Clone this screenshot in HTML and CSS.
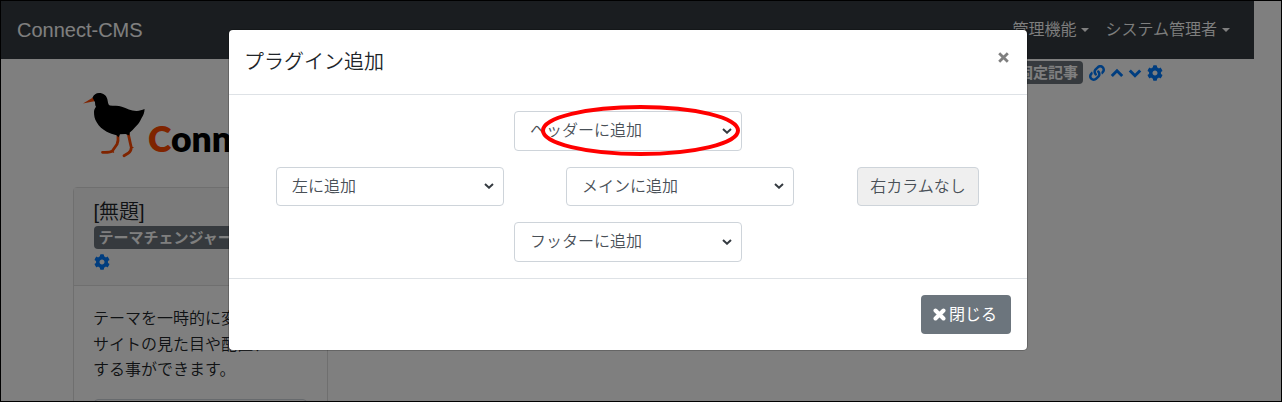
FILE: index.html
```
<!DOCTYPE html>
<html lang="ja">
<head>
<meta charset="utf-8">
<title>Connect-CMS</title>
<link rel="stylesheet" href="styles.css">
</head>
<body>
<svg class="defs" width="0" height="0" aria-hidden="true">
  <symbol id="gear" viewBox="0 0 512 512"><path d="M487.4 315.7l-42.600-24.600c4.300-23.200 4.300-47 0-70.200l42.600-24.600c4.900-2.800 7.100-8.600 5.500-14-11.100-35.600-30-67.800-54.700-94.600-3.800-4.100-10-5.100-14.800-2.300L380.800 110c-17.900-15.400-38.500-27.300-60.800-35.100V25.800c0-5.600-3.900-10.500-9.400-11.700-36.700-8.200-74.300-7.800-109.200 0-5.500 1.200-9.400 6.100-9.400 11.700V75c-22.200 7.900-42.800 19.800-60.800 35.100L88.700 85.500c-4.900-2.800-11-1.900-14.800 2.300-24.700 26.700-43.600 58.900-54.700 94.600-1.700 5.400.6 11.200 5.500 14L67.300 221c-4.300 23.200-4.300 47 0 70.200l-42.600 24.600c-4.900 2.800-7.100 8.600-5.500 14 11.100 35.600 30 67.800 54.700 94.600 3.800 4.100 10 5.100 14.800 2.300l42.600-24.600c17.900 15.400 38.500 27.300 60.800 35.100v49.200c0 5.600 3.900 10.500 9.400 11.700 36.700 8.200 74.300 7.800 109.200 0 5.500-1.200 9.400-6.100 9.400-11.700v-49.200c22.200-7.900 42.800-19.800 60.800-35.100l42.600 24.600c4.900 2.800 11 1.900 14.800-2.300 24.700-26.700 43.600-58.900 54.700-94.600 1.500-5.500-.7-11.300-5.600-14.100zM256 336c-44.100 0-80-35.900-80-80s35.900-80 80-80 80 35.900 80 80-35.900 80-80 80z"/></symbol>
</svg>
<div class="screen">
  <nav class="navbar">
    <span class="brand">Connect-CMS</span>
    <span class="menu">管理機能<i class="caret"></i></span>
    <span class="menu">システム管理者<i class="caret"></i></span>
  </nav>
  <div class="content">
    <aside class="side">
      <div class="logo">
        <svg class="bird" width="64" height="66" viewBox="0 0 64 66">
          <g class="legs">
            <path d="M35 42.500Q35.500 48 34 51.300L29.300 58Q28 59.500 19.500 59.300"/>
            <path d="M45.300 41 47.300 50.300 48.300 54.500Q48 58.500 45.500 60L41 62.800"/>
          </g>
          <path class="foot" d="M29 58l2 1.500M48 54.500h2.500"/>
          <path d="M0 10.500 10 4.500 12.500 8z" fill="#ff4800"/>
          <path d="M9.500 4.500C11 1.500 13 0 16 0c4.500 0 7.300 2.500 8.300 6 .6 2.300.5 5.500 2.500 6.500 4 .3 8.500 0 12 1.200 5 1.500 9.500 4.500 15 4.300 3-.1 5-1 7.800-2-.2 4-1.200 6.500-3 9-1.500 3.500-3.500 6.700-6.300 9-1.800 2-3.500 4-5.500 5.500l-.5 3-3.800-1.500-5.500.2-1.500 3-2-2C30 41.500 26.500 40 23.700 38.700 19.500 36.500 16 33.500 13.700 29.300 11.500 26 11 22.500 11 18.700c.2-2 .8-3.500 2-5-1-1.500-.8-3-1-4.500z" fill="#000"/>
        </svg>
        <span class="logo-text"><span class="logo-c">C</span>onnect</span>
      </div>
      <section class="card">
        <header class="card-head">
          <div class="card-title">[無題]</div>
          <div class="badge">テーマチェンジャー</div>
          <svg class="ico card-gear"><use href="#gear"/></svg>
        </header>
        <div class="card-body">
          <p>テーマを一時的に変更し<br>サイトの見た目や配置、<br>する事ができます。</p>
          <div class="theme-select"></div>
        </div>
      </section>
    </aside>
    <div class="tools">
      <div class="badge">固定記事</div>
      <svg class="ico" viewBox="0 0 512 512"><path d="M326.612 185.391c59.747 59.809 58.927 155.698.36 214.590-.110.120-.240.250-.360.370l-67.200 67.200c-59.270 59.270-155.699 59.262-214.960 0-59.270-59.260-59.270-155.700 0-214.960l37.106-37.106c9.840-9.840 26.786-3.300 27.294 10.606.648 17.722 3.826 35.527 9.690 52.721 1.986 5.822.567 12.262-3.783 16.612l-13.087 13.087c-28.026 28.026-28.905 73.660-1.155 101.960 28.024 28.579 74.086 28.749 102.325.510l67.200-67.190c28.191-28.191 28.073-73.757 0-101.830-3.701-3.694-7.429-6.564-10.341-8.569a16.037 16.037 0 0 1-6.947-12.606c-.396-10.567 3.348-21.456 11.698-29.806l21.054-21.055c5.521-5.521 14.182-6.199 20.584-1.731a152.482 152.482 0 0 1 20.522 17.197zM467.547 44.449c-59.261-59.262-155.690-59.270-214.960 0l-67.200 67.200c-.120.120-.250.250-.360.370-58.566 58.892-59.387 154.781.360 214.590a152.454 152.454 0 0 0 20.521 17.196c6.402 4.468 15.064 3.789 20.584-1.731l21.054-21.055c8.350-8.350 12.094-19.239 11.698-29.806a16.037 16.037 0 0 0-6.947-12.606c-2.912-2.005-6.640-4.875-10.341-8.569-28.073-28.073-28.191-73.639 0-101.830l67.200-67.190c28.239-28.239 74.300-28.069 102.325.510 27.750 28.300 26.872 73.934-1.155 101.960l-13.087 13.087c-4.350 4.350-5.769 10.790-3.783 16.612 5.864 17.194 9.042 34.999 9.690 52.721.509 13.906 17.454 20.446 27.294 10.606l37.106-37.106c59.271-59.259 59.271-155.699.001-214.959z"/></svg>
      <svg class="chev" viewBox="0 0 14 16"><path d="M1.800 11 7 5.800l5.200 5.200"/></svg>
      <svg class="chev" viewBox="0 0 14 16"><path d="M1.800 5.500l5.200 5.200 5.200-5.200"/></svg>
      <svg class="ico"><use href="#gear"/></svg>
    </div>
  </div>
  <div class="backdrop"></div>
  <div class="modal">
    <header class="modal-head"><h5>プラグイン追加</h5>
      <svg class="close" width="11" height="11" viewBox="0 0 11 11"><path d="M1.200 1.200l8.600 8.600M9.800 1.200 1.200 9.800"/></svg>
    </header>
    <div class="modal-body">
      <div class="row"><div class="select">ヘッダーに追加<svg class="arrow" viewBox="0 0 10 6"><path d="M1 1l4 3.700L9 1"/></svg></div></div>
      <div class="row columns">
        <div class="select">左に追加<svg class="arrow" viewBox="0 0 10 6"><path d="M1 1l4 3.700L9 1"/></svg></div>
        <div class="select">メインに追加<svg class="arrow" viewBox="0 0 10 6"><path d="M1 1l4 3.700L9 1"/></svg></div>
        <div class="disabled">右カラムなし</div>
      </div>
      <div class="row"><div class="select">フッターに追加<svg class="arrow" viewBox="0 0 10 6"><path d="M1 1l4 3.700L9 1"/></svg></div></div>
    </div>
    <footer class="modal-foot">
      <div class="button"><svg width="13" height="13" viewBox="0 0 13 13"><path d="M2.500 2.500l8 8M10.500 2.500l-8 8"/></svg>閉じる</div>
    </footer>
  </div>
  <svg class="marker" width="200" height="52" viewBox="0 0 200 52"><ellipse cx="99.500" cy="25.500" rx="97.500" ry="23.500"/></svg>
</div>
</body>
</html>
```
FILE: styles.css
```
* { box-sizing: border-box; }
body {
  margin: 0;
  font: 350 16px/25.6px "Liberation Sans", "Noto Sans CJK JP", sans-serif;
  color: #212529;
}
.defs { position: absolute; }
.screen {
  position: relative;
  width: 1282px;
  height: 402px;
  border: 1px solid #000;
  overflow: hidden;
  background: #fff;
}
.navbar {
  display: flex;
  align-items: center;
  gap: 16px;
  width: 1253px;
  height: 58px;
  padding: 0 24px 0 16px;
  background: #343a40;
  color: #fff;
}
.brand { margin-right: auto; padding-top: 1px; font-size: 20px; }
.menu { display: flex; align-items: center; gap: 5px; white-space: nowrap; }
.caret { border: 4px solid transparent; border-top-color: #fff; border-bottom: 0; }
.content { display: flex; justify-content: space-between; width: 1162px; }
.side { width: 327px; padding-left: 72px; flex: none; }
.logo { display: flex; height: 128px; padding: 34px 0 0 10px; }
.bird { flex: none; }
.legs { fill: none; stroke: #ff4800; stroke-width: 2.8; stroke-linecap: round; stroke-linejoin: round; }
.foot { fill: none; stroke: #ff4800; stroke-width: 1.2; }
.logo-text {
  margin: 24px 0 0 1px;
  font: 800 35.5px/44px Lato, sans-serif;
  color: #000;
}
.logo-c { color: #ff4800; }
.card { height: 240px; border: 1px solid #dfdfdf; border-radius: 4px; }
.card-head {
  height: 98px;
  padding: 11px 20px 11px 19.5px;
  border-bottom: 1px solid #dfdfdf;
  background: #f7f7f7;
}
.card-title { font-size: 20px; line-height: 27px; }
.badge {
  height: 23px;
  padding: 0 5px;
  border-radius: 4px;
  background: #6c757d;
  color: #fff;
  font-size: 15px;
  font-weight: 700;
  line-height: 24px;
  white-space: nowrap;
}
.ico { display: block; width: 16px; height: 16px; fill: #007bff; flex: none; }
.card-gear { margin-top: 5px; }
.card-body { padding: 20px 20px 20px 19px; }
.card-body p { margin: 0; white-space: nowrap; }
.theme-select { height: 38px; margin: 16px 0 0 1px; border: 1px solid #ced4da; border-radius: 4px; }
.tools { display: flex; align-items: center; height: 23px; margin-top: 2px; gap: 6px; }
.tools .chev { margin-left: -1px; }
.tools .chev + .chev { margin-left: -2px; }
.tools .chev + .ico { margin-left: -1px; }
.chev { width: 14px; height: 16px; fill: none; stroke: #007bff; stroke-width: 3; }
.backdrop { position: absolute; inset: 0; background: rgba(0, 0, 0, .5); }
.modal {
  position: absolute;
  left: 228px;
  top: 29px;
  width: 798px;
  height: 320px;
  border-radius: 4px;
  background: #fff;
  box-shadow: 0 0 0 1px rgba(0, 0, 0, .2);
}
.modal-head {
  display: flex;
  justify-content: space-between;
  height: 65px;
  padding: 16px 16px 16px 15px;
  border-bottom: 1px solid #dee2e6;
}
.modal-head h5 { margin: 0; font-size: 20px; font-weight: 350; line-height: 32px; }
.close { margin: 6px 2px 0 0; fill: none; stroke: #7f7f7f; stroke-width: 2.8; }
.modal-body { display: flex; flex-direction: column; gap: 16px; height: 183px; padding: 16px 0; }
.row { display: flex; justify-content: center; }
.columns { justify-content: flex-start; gap: 62px; padding-left: 47px; }
.columns .disabled { margin-left: 1px; }
.select, .disabled {
  display: flex;
  align-items: center;
  justify-content: space-between;
  width: 228px;
  height: 39.6px;
  padding: 0 9px 0 15px;
  border: 1px solid #ced4da;
  border-radius: 4px;
  color: #495057;
}
.disabled { width: 122px; padding: 0; justify-content: center; background: #efefef; }
.arrow { width: 10px; height: 6px; fill: none; stroke: #343a40; stroke-width: 2; }
.modal-foot { display: flex; justify-content: flex-end; border-top: 1px solid #dee2e6; padding: 16px; }
.button {
  display: flex;
  align-items: center;
  gap: 3px;
  width: 90px;
  height: 39px;
  padding: 0 0 0 12px;
  border-radius: 4px;
  background: #6c757d;
  color: #fff;
  font-weight: 400;
  white-space: nowrap;
}
.button svg { flex: none; fill: none; stroke: #fff; stroke-width: 4; stroke-linecap: round; }
.marker { position: absolute; left: 540px; top: 104px; fill: none; stroke: #f00; stroke-width: 4; }
```
